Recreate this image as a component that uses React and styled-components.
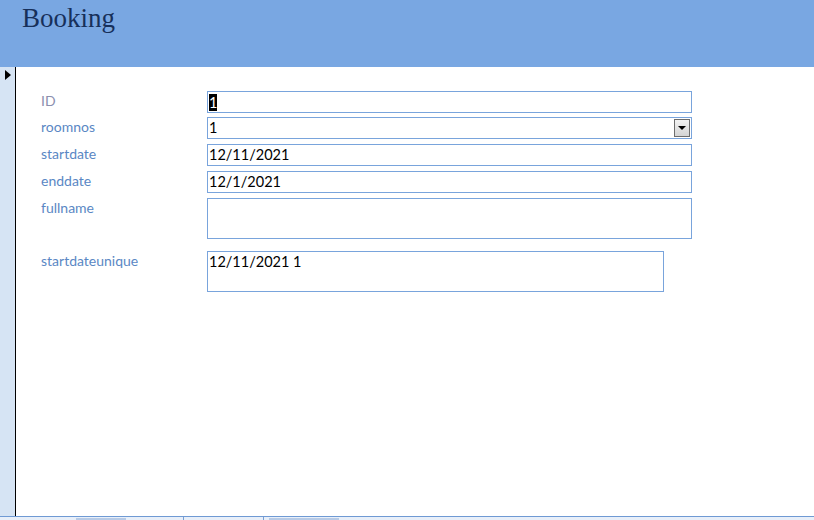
import React from "react";
import styled, { createGlobalStyle } from "styled-components";

const GlobalStyle = createGlobalStyle`
  html, body {
    margin: 0;
    padding: 0;
    background: #ffffff;
  }
  body {
    font-family: Lato, "Liberation Sans", sans-serif;
  }
`;

export default function App() {
  return (
    <>
      <GlobalStyle />
      <Page>
        <FormHeader>
          <Title>Booking</Title>
        </FormHeader>
        <Body>
          <RecordSelector>
            <Pointer />
          </RecordSelector>
          <Detail>
            <FieldGrid>
              <Label muted>ID</Label>
              <TextBox first>
                <Selected>1</Selected>
              </TextBox>

              <Label>roomnos</Label>
              <TextBox>
                1
                <DropButton>
                  <DropArrow />
                </DropButton>
              </TextBox>

              <Label>startdate</Label>
              <TextBox>12/11/2021</TextBox>

              <Label>enddate</Label>
              <TextBox>12/1/2021</TextBox>

              <Label>fullname</Label>
              <TextBox tall />

              <Label spaced>startdateunique</Label>
              <TextBox tall spaced narrow>
                12/11/2021 1
              </TextBox>
            </FieldGrid>
          </Detail>
        </Body>
        <Footer>
          <FooterThumb width={50} offset={76} />
          <FooterSep offset={183} />
          <FooterSep offset={263} />
          <FooterThumb width={70} offset={269} />
        </Footer>
      </Page>
    </>
  );
}

export const Page = styled.div`
  display: flex;
  flex-direction: column;
  width: 814px;
  height: 520px;
  overflow: hidden;
`;

export const FormHeader = styled.div`
  height: 67px;
  flex-shrink: 0;
  background-color: #79a7e2;
  padding-left: 22px;
  box-sizing: border-box;
`;

export const Title = styled.h1`
  margin: 0;
  padding-top: 1px;
  font-family: "Liberation Serif", "DejaVu Serif", serif;
  font-weight: normal;
  font-size: 27px;
  line-height: 34px;
  color: #17305a;
`;

export const Body = styled.div`
  display: flex;
  flex: 1;
`;

export const RecordSelector = styled.div`
  width: 15px;
  flex-shrink: 0;
  background-color: #d6e4f4;
  border-right: 1px solid #000000;
  padding-top: 3px;
  box-sizing: content-box;
`;

export const Pointer = styled.div`
  width: 0;
  height: 0;
  margin-left: 5px;
  border-top: 5px solid transparent;
  border-bottom: 5px solid transparent;
  border-left: 6px solid #000000;
`;

export const Detail = styled.div`
  flex: 1;
  padding: 23px 0 0 25px;
`;

export const FieldGrid = styled.div`
  display: grid;
  grid-template-columns: 166px 485px;
  row-gap: 5px;
  align-items: start;
`;

export const Label = styled.div`
  font-size: 14px;
  line-height: 20px;
  color: ${(p) => (p.muted ? "#8b8fae" : "#5a87c4")};
  margin-top: ${(p) => (p.spaced ? "7px" : p.muted ? "1px" : "0")};
`;

export const TextBox = styled.div`
  position: relative;
  box-sizing: border-box;
  width: ${(p) => (p.narrow ? "457px" : "485px")};
  height: ${(p) => (p.tall ? "41px" : "22px")};
  margin-top: ${(p) => (p.spaced ? "7px" : p.first ? "1px" : "0")};
  margin-bottom: ${(p) => (p.first ? "-1px" : "0")};
  border: 1px solid #79a4dc;
  padding: 0 0 0 1px;
  font-size: 14.5px;
  line-height: 20px;
  color: #000000;
`;

export const Selected = styled.span`
  background: #000000;
  color: #ffffff;
  display: inline-block;
  line-height: 17px;
  margin-top: 2px;
`;

export const DropButton = styled.div`
  position: absolute;
  right: 1px;
  top: 1px;
  width: 16px;
  height: 18px;
  box-sizing: border-box;
  border: 1px solid #6d6d6d;
  background: linear-gradient(#f2f2f2, #d4d4d4);
  display: flex;
  align-items: center;
  justify-content: center;
`;

export const DropArrow = styled.div`
  width: 0;
  height: 0;
  border-left: 4px solid transparent;
  border-right: 4px solid transparent;
  border-top: 4px solid #000000;
`;

export const Footer = styled.div`
  position: relative;
  height: 3px;
  flex-shrink: 0;
  border-top: 1px solid #6f9ad4;
  background: #e8eff9;
`;

export const FooterThumb = styled.div`
  position: absolute;
  top: 1px;
  left: ${(p) => p.offset}px;
  width: ${(p) => p.width}px;
  height: 2px;
  background: #b7cae6;
`;

export const FooterSep = styled.div`
  position: absolute;
  top: 0;
  left: ${(p) => p.offset}px;
  width: 1px;
  height: 3px;
  background: #7a9fd3;
`;
